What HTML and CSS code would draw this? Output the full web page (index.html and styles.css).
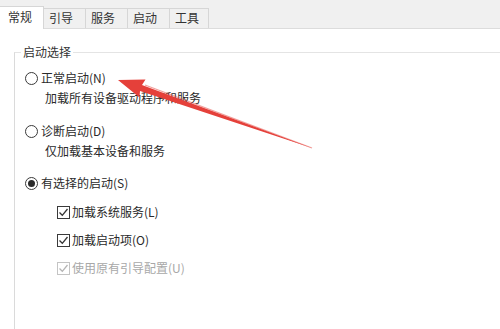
FILE: index.html
```html
<!DOCTYPE html>
<html lang="zh-CN">
<head>
<meta charset="utf-8">
<title>系统配置</title>
<link rel="stylesheet" href="styles.css">
</head>
<body>
<div class="page">
  <div class="tabs">
    <div class="tab active">常规</div>
    <div class="tab">引导</div>
    <div class="tab">服务</div>
    <div class="tab">启动</div>
    <div class="tab last">工具</div>
  </div>
  <div class="content">
    <fieldset class="group">
      <legend class="legend">启动选择</legend>
      <div class="row radio-row r1"><span class="radio"></span><span>正常启动(N)</span></div>
      <div class="row desc">加载所有设备驱动程序和服务</div>
      <div class="row radio-row r2"><span class="radio"></span><span>诊断启动(D)</span></div>
      <div class="row desc">仅加载基本设备和服务</div>
      <div class="row radio-row r3"><span class="radio checked"><span class="dot"></span></span><span>有选择的启动(S)</span></div>
      <div class="row check-row c1"><span class="check"><svg viewBox="0 0 11 11" width="11" height="11"><path d="M1.5 5.5 L4.3 8.3 L9.5 2" fill="none" stroke="#333" stroke-width="1.3"/></svg></span><span>加载系统服务(L)</span></div>
      <div class="row check-row c2"><span class="check"><svg viewBox="0 0 11 11" width="11" height="11"><path d="M1.5 5.5 L4.3 8.3 L9.5 2" fill="none" stroke="#333" stroke-width="1.3"/></svg></span><span>加载启动项(O)</span></div>
      <div class="row check-row c3 disabled"><span class="check"><svg viewBox="0 0 11 11" width="11" height="11"><path d="M1.5 5.5 L4.3 8.3 L9.5 2" fill="none" stroke="#b5b5b5" stroke-width="1.3"/></svg></span><span>使用原有引导配置(U)</span></div>
    </fieldset>
  </div>
  <svg class="arrow" viewBox="0 0 500 329" width="500" height="329">
    <polygon points="118,80 145.5,79.5 142,85 312,148 140,91 139.5,97.5" fill="#e5403a"/>
    <path d="M145 85 L312 148" stroke="#e5403a" stroke-width="1.2" opacity="0.5"/>
  </svg>
</div>
</body>
</html>
```

FILE: styles.css
```css
* { box-sizing: border-box; }
html, body {
  margin: 0;
  padding: 0;
  background: #ffffff;
}
body {
  font-family: "Noto Sans CJK SC", "Microsoft YaHei", sans-serif;
  font-size: 12px;
  color: #2a2a2a;
}
.page {
  position: relative;
  width: 500px;
  height: 329px;
  overflow: hidden;
}
.tabs {
  display: flex;
  align-items: flex-end;
  height: 29px;
  background: #f0f0f0;
  border-bottom: 1px solid #dcdcdc;
}
.tab {
  height: 20px;
  line-height: 17px;
  padding: 0 12px 0 5px;
  border: 1px solid #d6d6d6;
  border-bottom: none;
  margin-right: -1px;
  background: #f0f0f0;
  color: #333;
}
.tab.last { padding-right: 9px; }
.tab.active {
  height: 23px;
  line-height: 20px;
  margin-left: -1px;
  margin-bottom: -1px;
  padding-left: 8px;
  padding-right: 11px;
  background: #ffffff;
  position: relative;
  z-index: 1;
}
.content {
  background: #ffffff;
}
.group {
  margin: 15px 0 0 14px;
  padding: 8px 0 100px 0;
  border: none;
  border-top: 1px solid #e4e4e4;
  border-left: 1px solid #dadada;
  min-width: 0;
}
.legend {
  margin-left: 6px;
  padding: 0 2px;
  line-height: 16px;
  color: #333;
}
.row {
  display: flex;
  align-items: center;
  height: 20px;
  line-height: 20px;
}
.radio-row { padding-left: 10px; gap: 3px; }
.desc { padding-left: 30px; }
.check-row { padding-left: 42px; gap: 2px; }
.r2 { margin-top: 13px; }
.r3 { margin-top: 12px; }
.c1 { margin-top: 9px; }
.c2, .c3 { margin-top: 8px; }
.radio {
  width: 13px;
  height: 13px;
  border: 1px solid #3a3a3a;
  border-radius: 50%;
  display: flex;
  align-items: center;
  justify-content: center;
  flex: none;
}
.dot {
  width: 7px;
  height: 7px;
  border-radius: 50%;
  background: #2a2a2a;
}
.check {
  width: 13px;
  height: 13px;
  border: 1px solid #3a3a3a;
  display: flex;
  align-items: center;
  justify-content: center;
  flex: none;
}
.disabled { color: #a8a8a8; }
.disabled .check { border-color: #c4c4c4; }
.arrow {
  position: absolute;
  left: 0;
  top: 0;
  pointer-events: none;
}
```
